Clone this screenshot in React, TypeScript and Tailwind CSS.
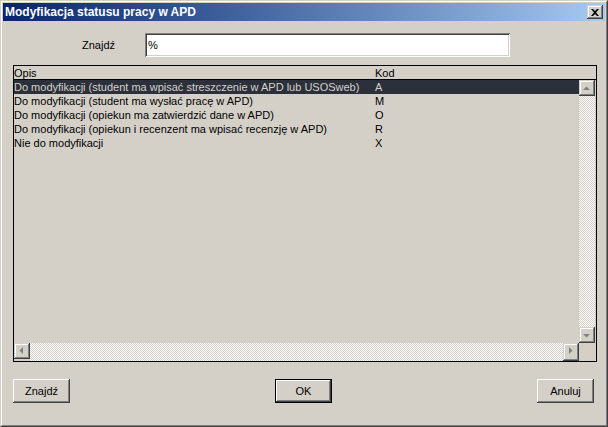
import React from "react";

const font = "font-['Liberation_Sans',Arial,sans-serif]";
const raised =
  "shadow-[inset_-1px_-1px_#404040,inset_1px_1px_#d4d0c8,inset_-2px_-2px_#808080,inset_2px_2px_#ffffff]";
const pushRaised =
  "shadow-[inset_-1px_-1px_#404040,inset_1px_1px_#ffffff,inset_-2px_-2px_#808080]";
const checker =
  "bg-[repeating-conic-gradient(#d4d0c8_0_25%,#ffffff_0_50%)] bg-size-[2px_2px]";

const rows = [
  { opis: "Do modyfikacji (student ma wpisać streszczenie w APD lub USOSweb)", kod: "A" },
  { opis: "Do modyfikacji (student ma wysłać pracę w APD)", kod: "M" },
  { opis: "Do modyfikacji (opiekun ma zatwierdzić dane w APD)", kod: "O" },
  { opis: "Do modyfikacji (opiekun i recenzent ma wpisać recenzję w APD)", kod: "R" },
  { opis: "Nie do modyfikacji", kod: "X" },
];

function Arrow({ dir }: { dir: "up" | "down" | "left" | "right" }) {
  const pts = {
    up: "4,10 11,10 7.5,6.5",
    down: "4,7 11,7 7.5,10.5",
    left: "9,4 9,11 5.5,7.5",
    right: "6,4 6,11 9.5,7.5",
  }[dir];
  return (
    <svg width="16" height="16" viewBox="0 0 16 16" className="block">
      <polygon points={pts} fill="#808080" />
    </svg>
  );
}

function ScrollBtn({ dir }: { dir: "up" | "down" | "left" | "right" }) {
  return (
    <div className={`w-[16px] h-[16px] shrink-0 bg-[#d4d0c8] ${raised}`}>
      <Arrow dir={dir} />
    </div>
  );
}

function Button({ label, isDefault }: { label: string; isDefault?: boolean }) {
  return (
    <button
      className={`w-[57px] h-[24px] bg-[#d4d0c8] text-[11px] text-black ${
        isDefault ? "border border-black" : ""
      }`}
    >
      <div className={`w-full h-full flex items-center justify-center ${pushRaised}`}>
        {label}
      </div>
    </button>
  );
}

export default function App() {
  return (
    <div className={`w-[608px] h-[427px] ${font} text-black select-none`}>
      <div className="w-full h-full border border-t-[#d4d0c8] border-l-[#d4d0c8] border-r-[#404040] border-b-[#404040] bg-[#d4d0c8]">
        <div className="w-full h-full border border-t-white border-l-white border-r-[#808080] border-b-[#808080] p-[1px] flex flex-col">
          {/* title bar */}
          <div className="h-[18px] shrink-0 flex items-center justify-between bg-gradient-to-r from-[#0a246a] to-[#a6caf0] pl-[2px] pr-[2px]">
            <span className="text-[12px] font-bold text-white leading-none">
              Modyfikacja statusu pracy w APD
            </span>
            <div className={`w-[16px] h-[14px] bg-[#d4d0c8] ${raised} flex items-center justify-center`}>
              <svg width="8" height="7" viewBox="0 0 8 7">
                <path d="M0 0h2l2 2 2-2h2L5 3.5 8 7H6L4 5 2 7H0l3-3.5z" fill="#000" />
              </svg>
            </div>
          </div>

          {/* search row */}
          <div className="flex items-center mt-[12px] h-[24px]">
            <div className="ml-[79px] w-[63px] text-[11px]">Znajdź</div>
            <div
              className={`w-[365px] h-[24px] bg-white text-[11px] pl-[3px] pt-[4px] shadow-[inset_1px_1px_#808080,inset_-1px_-1px_#ffffff,inset_2px_2px_#404040,inset_-2px_-2px_#d4d0c8]`}
            >
              %
            </div>
          </div>

          {/* list */}
          <div className="ml-[10px] mt-[8px] w-[584px] h-[297px] border border-black flex flex-col text-[11px]">
            <div className="h-[14px] shrink-0 flex items-end border-b border-black leading-[12px]">
              <div className="w-[361px]">Opis</div>
              <div>Kod</div>
            </div>
            <div className="flex flex-1 min-h-0">
              <div className="flex-1">
                {rows.map((r, i) => (
                  <div
                    key={r.kod}
                    className={`h-[14px] flex items-center ${
                      i === 0 ? "bg-[#2c303b] text-[#d4d0c8]" : ""
                    }`}
                  >
                    <div className="w-[361px] whitespace-nowrap">{r.opis}</div>
                    <div>{r.kod}</div>
                  </div>
                ))}
              </div>
              <div className="w-[17px] flex flex-col">
                <ScrollBtn dir="up" />
                <div className={`flex-1 w-[16px] ${checker}`} />
                <ScrollBtn dir="down" />
              </div>
            </div>
            <div className="h-[18px] shrink-0 flex">
              <div className="flex-1 flex">
                <ScrollBtn dir="left" />
                <div className={`flex-1 h-[18px] ${checker}`} />
                <div className={`w-[16px] h-[18px] bg-[#d4d0c8] ${raised}`}>
                  <Arrow dir="right" />
                </div>
              </div>
              <div className="w-[17px] bg-[#d4d0c8]" />
            </div>
          </div>

          {/* buttons */}
          <div className="flex justify-between items-center mt-[17px] pl-[10px] pr-[11px]">
            <Button label="Znajdź" />
            <Button label="OK" isDefault />
            <Button label="Anuluj" />
          </div>
        </div>
      </div>
    </div>
  );
}
